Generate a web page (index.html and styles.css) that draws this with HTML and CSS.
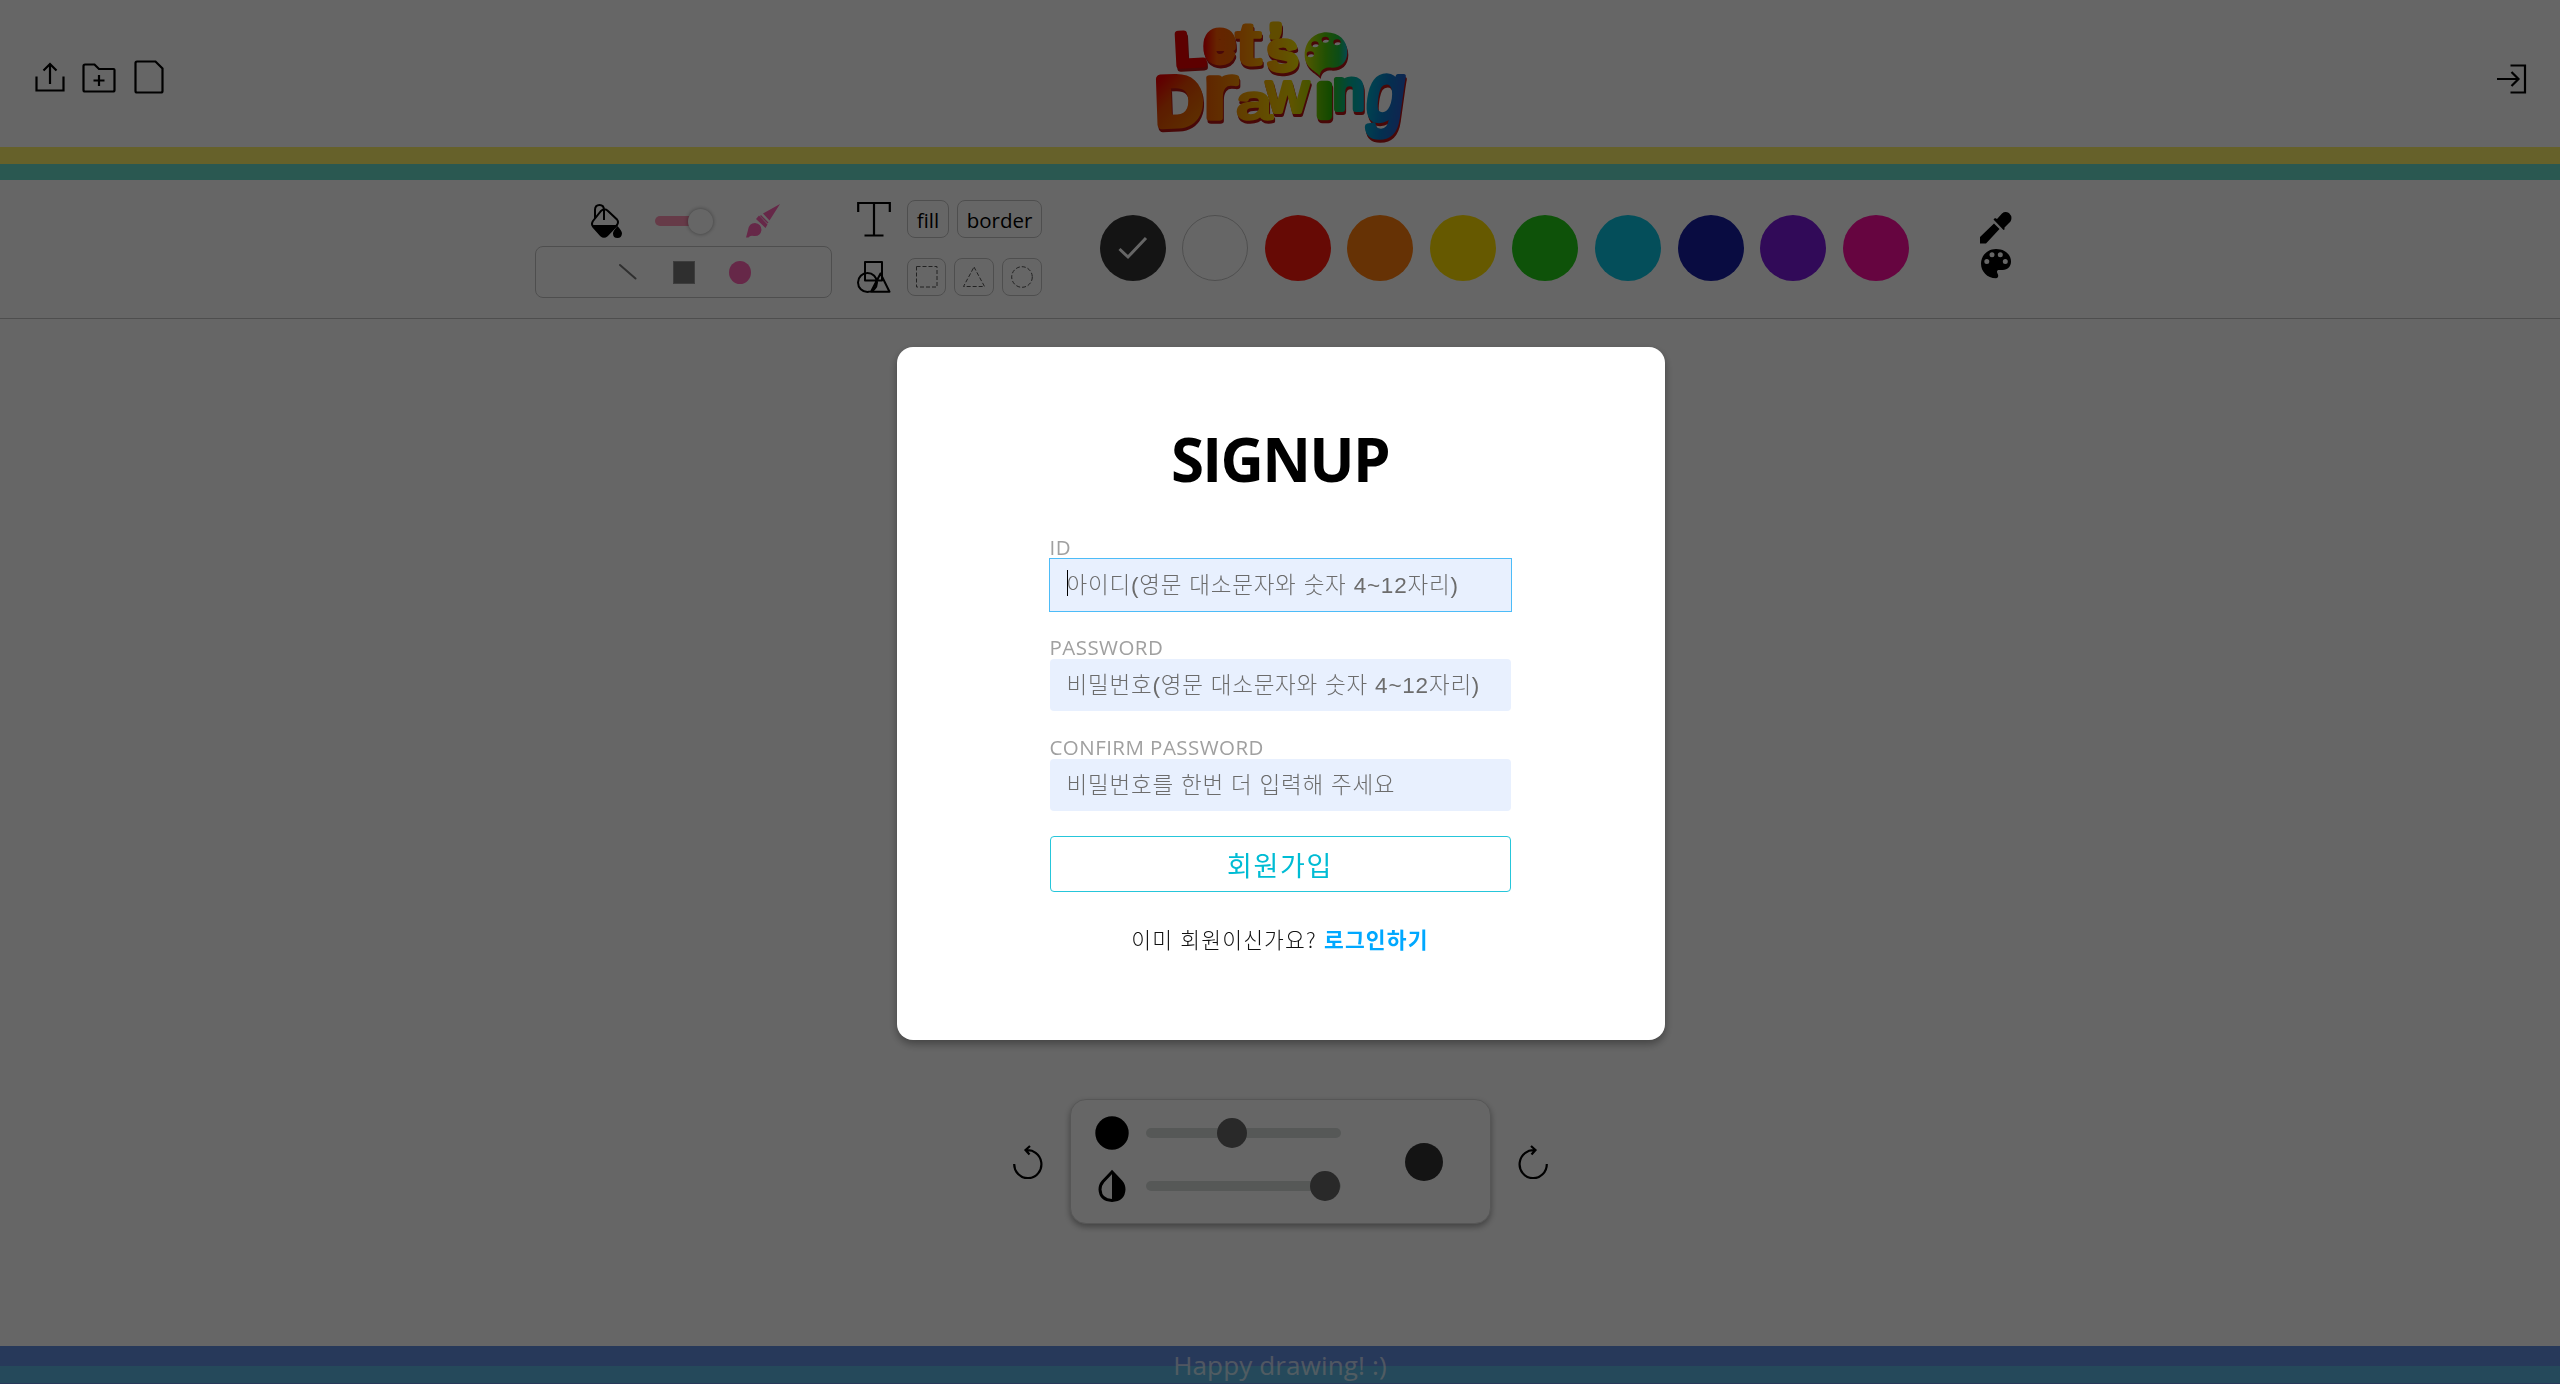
FILE: index.html
```html
<!DOCTYPE html>
<html lang="ko">
<head>
<meta charset="utf-8">
<title>Let's Drawing</title>
<link rel="stylesheet" href="styles.css">
</head>
<body>
<header class="header">
  <nav class="header-menu">
    <svg class="icon-upload" width="30" height="30" viewBox="0 0 30 30"><path d="M1.5 14.5V28.5H28.500V14.500M15 22V2.500M8.500 8.500L15 2L21.500 8.500"/></svg>
    <svg class="icon-folder" width="34" height="30" viewBox="0 0 34 30"><path d="M2.500 1.500H12.500L17 6H31.500Q32.500 6 32.500 7V27Q32.500 28.500 31 28.500H3Q1.500 28.500 1.500 27V3Q1.500 1.500 3 1.500M17 12V23M11.500 17.500H22.500"/></svg>
    <svg class="icon-file" width="30" height="34" viewBox="0 0 30 34"><path d="M3 1.500H21.500L28.500 8.500V31Q28.500 32.500 27 32.500H3Q1.500 32.500 1.500 31V3Q1.500 1.500 3 1.500Z"/></svg>
  </nav>
  <svg class="logo" width="264" height="132" viewBox="60 45 792 396">
    <defs>
      <linearGradient id="c-e"><stop offset="0" stop-color="#f00000"/><stop offset=".4" stop-color="#ff5a00"/><stop offset="1" stop-color="#f06400"/></linearGradient>
      <linearGradient id="c-t"><stop offset="0" stop-color="#ff7800"/><stop offset="1" stop-color="#ffa800"/></linearGradient>
      <linearGradient id="c-s"><stop offset="0" stop-color="#ffa800"/><stop offset="1" stop-color="#f0e000"/></linearGradient>
      <linearGradient id="c-p"><stop offset="0" stop-color="#d2dc00"/><stop offset=".5" stop-color="#50c80a"/><stop offset=".8" stop-color="#1ebe3c"/><stop offset="1" stop-color="#14b4c8"/></linearGradient>
      <linearGradient id="c-d" x1="0" y1="0" x2=".6" y2="1"><stop offset=".2" stop-color="#f00000"/><stop offset=".5" stop-color="#e64600"/><stop offset="1" stop-color="#eb7800"/></linearGradient>
      <linearGradient id="c-r"><stop offset="0" stop-color="#f05a00"/><stop offset="1" stop-color="#f58c00"/></linearGradient>
      <linearGradient id="c-a"><stop offset="0" stop-color="#f59600"/><stop offset="1" stop-color="#f5c800"/></linearGradient>
      <linearGradient id="c-w"><stop offset="0" stop-color="#f5b400"/><stop offset=".6" stop-color="#ebd200"/><stop offset="1" stop-color="#b4d200"/></linearGradient>
      <linearGradient id="c-i"><stop offset="0" stop-color="#78c800"/><stop offset="1" stop-color="#1eb400"/></linearGradient>
      <linearGradient id="c-n"><stop offset="0" stop-color="#28be28"/><stop offset=".5" stop-color="#00b496"/><stop offset="1" stop-color="#00aac8"/></linearGradient>
      <linearGradient id="c-g"><stop offset="0" stop-color="#00aac8"/><stop offset=".5" stop-color="#0a78c8"/><stop offset="1" stop-color="#285ac8"/></linearGradient>
    </defs>
    <g class="logo-letters">
      <text transform="translate(140 197) rotate(-3) scale(1.58 1.38)" fill="#e80000" stroke="#e80000">L</text>
      <text transform="translate(227 184) scale(1.61 1.67)" fill="url(#c-e)" stroke="url(#c-e)">e</text>
      <text class="thin" transform="translate(322 191) scale(2.6 1.78)" fill="url(#c-t)" stroke="url(#c-t)">t</text>
      <text transform="translate(422 180) scale(1.6 1.5)" fill="#f0be00" stroke="#f0be00">’</text>
      <text class="medium" transform="translate(420 212) rotate(-4) scale(1.75 1.6)" fill="url(#c-s)" stroke="url(#c-s)">s</text>
      <text transform="translate(83 374) rotate(-2) scale(1.9 1.98)" fill="url(#c-d)" stroke="url(#c-d)">D</text>
      <text class="thin" transform="translate(222 354) scale(3.1 2.3)" fill="url(#c-r)" stroke="url(#c-r)">r</text>
      <text class="thin" transform="translate(322 358) scale(1.92 1.45)" fill="url(#c-a)" stroke="url(#c-a)">a</text>
      <text class="thin" transform="translate(412 335) scale(1.76 1.7)" fill="url(#c-w)" stroke="url(#c-w)">w</text>
      <text transform="translate(558 348) scale(2.04 1.79)" fill="url(#c-i)" stroke="url(#c-i)">ı</text>
      <text class="medium" transform="translate(613 326) scale(1.68 1.65)" fill="url(#c-n)" stroke="url(#c-n)">n</text>
      <text class="thin" transform="translate(704 361) skewX(-8) scale(2.05 2.45)" fill="url(#c-g)" stroke="url(#c-g)">g</text>
      <path fill="url(#c-p)" fill-rule="evenodd" d="M572 228C562 212 527 206 527 165C527 123 558 97 592 97C630 97 655 122 655 156C655 190 632 204 608 203C590 202 576 206 572 228ZM533 163a11 9 0 1 0 22 0a11 9 0 1 0-22 0ZM547 133a11 9 0 1 0 22 0a11 9 0 1 0-22 0ZM578 119a11 9 0 1 0 22 0a11 9 0 1 0-22 0ZM613 127a11 9 0 1 0 22 0a11 9 0 1 0-22 0Z"/>
    </g>
  </svg>
  <svg class="icon-login" width="30" height="30" viewBox="0 0 30 30"><path d="M13.500 1.500H28V28.500H13.500M0 15H21M14.500 8L21.500 15L14.500 22"/></svg>
</header>
<div class="stripe stripe-yellow"></div>
<div class="stripe stripe-teal"></div>

<section class="toolbar">
  <div class="mode">
    <div class="mode-row">
      <svg width="32" height="34" viewBox="0 0 32 34"><path fill="none" stroke="#000" stroke-width="2" d="M13 16V6Q13 1 8.500 1Q4 1 4 6V14M10 7Q13.500 3.500 17 7L26 15.500Q28 18 26 21L16 31.500Q13 34 10 31.500L2 22.500Q0 20 2 17Z"/><path d="M1.500 21H26L16 31.500Q13 34 9.500 31.500ZM26.500 22Q31 27 31 29.500Q30.500 34 26.500 34Q22 34 22 29.500Q22 27 26.500 22Z"/></svg>
      <div class="switch"><span class="switch-track"></span><span class="switch-thumb"></span></div>
      <svg width="34" height="34" viewBox="0 0 34 34"><path fill="#ff64b4" d="M34 0L23.500 16.500L17 9.500ZM15 11L22.500 18.500L21.500 19.500L14 12ZM13 11.500L21.500 20.500L19.500 24L10 15ZM0 33.500Q1 30 2 26Q3 19 9 19Q15.500 20 15.500 26Q14.500 32.500 8 32Q4 31 2.500 33.500Z"/></svg>
    </div>
    <div class="strokes">
      <svg width="18" height="18" viewBox="0 0 18 18"><path d="M1 2L16.500 15.500" stroke="#777" stroke-width="2" stroke-linecap="round"/></svg>
      <span class="stroke-square"></span>
      <span class="stroke-dot"></span>
    </div>
  </div>
  <div class="shapes">
    <div class="shape-row">
      <svg width="34" height="36" viewBox="0 0 34 36"><path fill="none" stroke="#000" stroke-width="2.200" d="M1.200 11V2H32.800V11M17 2V34M7.500 34.500H26.500"/></svg>
      <button class="tool tool-fill">fill</button>
      <button class="tool tool-border">border</button>
    </div>
    <div class="shape-row shape-row-second">
      <svg width="34" height="32" viewBox="0 0 34 32"><path fill="none" stroke="#000" stroke-width="2" stroke-linejoin="round" d="M8 1H25V19.500H8ZM1 21.500a9.500 9.500 0 1 0 19 0a9.500 9.500 0 1 0-19 0M14 30.800H32.500L23.500 12.500Z"/></svg>
      <button class="tool tool-square"><svg width="22" height="22" viewBox="0 0 22 22"><rect class="dashed" x=".5" y=".5" width="20.500" height="20.500"/></svg></button>
      <button class="tool tool-triangle"><svg width="22" height="22" viewBox="0 0 22 22"><path class="dashed" d="M11 1L21.500 20.500H.5Z"/></svg></button>
      <button class="tool tool-circle"><svg width="22" height="22" viewBox="0 0 22 22"><circle class="dashed" cx="11" cy="11" r="10.300"/></svg></button>
    </div>
  </div>
  <div class="swatches">
    <span class="swatch black"><svg width="30" height="24" viewBox="0 0 30 24"><path d="M1.500 13L10 21L28 2" fill="none" stroke="#fff" stroke-width="3"/></svg></span>
    <span class="swatch white"></span>
    <span class="swatch red"></span>
    <span class="swatch orange"></span>
    <span class="swatch yellow"></span>
    <span class="swatch green"></span>
    <span class="swatch cyan"></span>
    <span class="swatch navy"></span>
    <span class="swatch purple"></span>
    <span class="swatch pink"></span>
  </div>
  <div class="pickers">
    <svg width="32" height="32" viewBox="0 0 32 32"><path d="M0 31.500V25L14 11.500L19.500 17L6 31.500ZM13.500 7.500L15 6L17 7L22 1.500Q25-1 29 1Q33 5 30.500 9.500L24.500 15.500V17.500L23.500 18Z"/></svg>
    <svg width="30" height="30" viewBox="0 0 30 30"><path fill-rule="evenodd" d="M15 0C24 0 30 5.500 30 12.500C30 17 27 21 21.500 21H18C16 21 15.500 22.500 16.500 24.500C18 27 17 29.300 15 29.300C6 29.300 0 22.500 0 14.600C0 6.500 6.500 0 15 0ZM3.300 12.400a2.500 2.500 0 1 0 5 0a2.500 2.500 0 1 0-5 0ZM8.500 5.800a2.500 2.500 0 1 0 5 0a2.500 2.500 0 1 0-5 0ZM16.800 5.800a2.500 2.500 0 1 0 5 0a2.500 2.500 0 1 0-5 0ZM21.800 12.400a2.500 2.500 0 1 0 5 0a2.500 2.500 0 1 0-5 0Z"/></svg>
  </div>
</section>

<main class="canvas">
  <div class="brush-bar">
    <svg width="30" height="34" viewBox="0 0 30 34"><path class="turn" d="M1.200 19A13.600 14 0 1 0 12 5.500M17 1L12.500 5L16.500 9.500"/></svg>
    <div class="brush-panel">
      <div class="brush-sliders">
        <div class="slider-row">
          <svg width="34" height="34" viewBox="0 0 34 34"><circle cx="17" cy="17" r="16.700"/></svg>
          <div class="slider"><span class="slider-thumb size-thumb"></span></div>
        </div>
        <div class="slider-row">
          <svg width="34" height="34" viewBox="0 0 34 34"><path fill="none" stroke="#000" stroke-width="3" d="M17 3L8 12.500Q5 16 5 20.500Q5.500 31 17 31.500Q28.500 31 29 20.500Q29 16 26 12.500Z"/><path d="M17 3L27 13Q29 16 29 20.500Q28.500 31 17 32Z"/></svg>
          <div class="slider"><span class="slider-thumb opacity-thumb"></span></div>
        </div>
      </div>
      <span class="preview"></span>
    </div>
    <svg width="30" height="34" viewBox="0 0 30 34"><path class="turn" d="M28.800 19A13.600 14 0 1 1 18 5.500M13 1L17.500 5L13.500 9.500"/></svg>
  </div>
</main>

<footer class="footer">Happy drawing! :)</footer>

<div class="overlay">
  <form class="modal">
    <h1 class="modal-title">SIGNUP</h1>
    <div class="field">
      <label class="label">ID</label>
      <div class="input focused"><span class="caret"></span><span class="placeholder">아이디(영문 대소문자와 숫자 4~12자리)</span></div>
    </div>
    <div class="field">
      <label class="label">PASSWORD</label>
      <div class="input"><span class="placeholder">비밀번호(영문 대소문자와 숫자 4~12자리)</span></div>
    </div>
    <div class="field">
      <label class="label">CONFIRM PASSWORD</label>
      <div class="input"><span class="placeholder">비밀번호를 한번 더 입력해 주세요</span></div>
    </div>
    <button class="submit" type="button">회원가입</button>
    <p class="switch-form">이미 회원이신가요? <a class="login-link">로그인하기</a></p>
  </form>
</div>
</body>
</html>
```
FILE: styles.css
```css
* { box-sizing: border-box; }

body {
  margin: 0;
  height: 1384px;
  overflow: hidden;
  display: flex;
  flex-direction: column;
  background: #fff;
  color: #000;
  font-family: "Open Sans", "Noto Sans CJK KR", sans-serif;
}

svg { display: block; flex: none; }

.header {
  height: 147px;
  display: grid;
  grid-template-columns: 1fr 264px 1fr;
  padding: 0 33px 0 35px;
}
.header-menu { display: flex; align-items: flex-start; }
.icon-upload { margin: 61.5px 17.5px 0 -.5px; }
.icon-folder { margin: 62.5px 17.5px 0 0; }
.icon-file { margin-top: 60px; }
.icon-login { justify-self: end; margin-top: 63.5px; }
.header-menu path, .icon-login path { fill: none; stroke: #000; stroke-width: 2.2; }
.logo { margin: 15px 0 0; overflow: visible; filter: drop-shadow(1.5px 3px 0 #b41414); }
.logo-letters text {
  font: 100px "Liberation Sans", sans-serif;
  stroke-width: 14;
  stroke-linejoin: round;
}
.logo-letters .thin { stroke-width: 7; }
.logo-letters .medium { stroke-width: 11; }

.stripe-yellow { height: 17px; background: #fff269; }
.stripe-teal { height: 16px; background: #69dccb; }

.toolbar {
  height: 139px;
  display: flex;
  align-items: flex-start;
  padding-left: 535px;
  border-bottom: 1px solid #c4c4c4;
}
.mode { width: 297px; margin-top: 24px; }
.mode-row {
  height: 34px;
  display: flex;
  justify-content: space-between;
  align-items: center;
  margin: 0 52px 8px 56px;
}
.switch { display: flex; align-items: center; width: 59px; height: 26px; }
.switch-track { flex: none; width: 40px; height: 10px; border-radius: 5px; background: #ff93b4; }
.switch-thumb {
  flex: none;
  width: 25px;
  height: 25px;
  margin-left: -7px;
  border-radius: 50%;
  background: #fff;
  box-shadow: 0 0 4px rgba(0, 0, 0, .4);
}
.strokes {
  height: 52px;
  display: flex;
  align-items: center;
  border: 1px solid #c4c4c4;
  border-radius: 8px;
  padding-left: 83px;
}
.stroke-square { width: 22px; height: 23px; margin-left: 36px; background: #777; border: 1px solid #999; }
.stroke-dot { width: 22px; height: 23px; margin-left: 34px; border-radius: 50%; background: #ff64b4; }

.shapes { width: 185px; margin: 20px 57.5px 0 25px; }
.shape-row { display: flex; align-items: center; height: 38px; }
.shape-row-second { margin-top: 20px; }
.tool {
  height: 38px;
  padding: 0;
  display: flex;
  align-items: center;
  justify-content: center;
  background: none;
  border: 1px solid #c4c4c4;
  border-radius: 8px;
  font: 20.5px "Open Sans", sans-serif;
  color: #000;
}
.tool-fill { width: 42px; margin: 0 8px 0 16px; }
.tool-border { width: 85px; }
.tool-fill, .tool-border { padding-top: 2px; }
.tool-square { width: 39px; margin-left: 16px; }
.tool-triangle { width: 40px; margin: 0 8px; }
.tool-circle { width: 40px; }
.dashed { fill: none; stroke: #555; stroke-width: 1; stroke-dasharray: 4 2; }

.swatches { display: flex; gap: 16.6px; margin: 35px 71px 0 0; }
.swatch {
  width: 66px;
  height: 66px;
  border-radius: 50%;
  display: flex;
  align-items: center;
  justify-content: center;
}
.black { background: #333; }
.white { border: 1px solid #c4c4c4; }
.red { background: #ff190d; }
.orange { background: #ff7d0d; }
.yellow { background: #ffdf00; }
.green { background: #23cd17; }
.cyan { background: #0ac3e1; }
.navy { background: #171ea3; }
.purple { background: #7a19dc; }
.pink { background: #ff0da0; }

.pickers { display: flex; flex-direction: column; gap: 5px; margin-top: 32px; }
.pickers svg + svg { margin-left: 1px; }

.canvas { flex: 1; display: flex; flex-direction: column; justify-content: flex-end; align-items: center; }
.brush-bar { display: flex; align-items: center; gap: 27px; margin: 0 0 122px 1px; }
.turn { fill: none; stroke: #000; stroke-width: 2.2; }
.brush-panel {
  width: 421px;
  height: 125px;
  display: flex;
  align-items: center;
  border: 1px solid #d8d8d8;
  border-radius: 16px;
  background: #fff;
  box-shadow: 0 3px 6px rgba(0, 0, 0, .35);
  padding-left: 24px;
}
.brush-sliders { display: flex; flex-direction: column; gap: 19px; margin: 0 64px 4px 0; }
.slider-row { display: flex; align-items: center; gap: 17px; }
.slider { width: 195px; height: 10px; border-radius: 5px; background: #d7dcda; display: flex; align-items: center; }
.slider-thumb { width: 30px; height: 30px; border-radius: 50%; background: #666; }
.size-thumb { margin-left: 71px; }
.opacity-thumb { margin-left: 164px; }
.preview { width: 38px; height: 38px; border-radius: 50%; background: #333; }

.footer {
  height: 38px;
  background: linear-gradient(#628fe1 20px, #5db7e4 20px, #5db7e4 37px, #628fe1 37px);
  color: rgba(255, 255, 255, .68);
  text-align: center;
  font-size: 26px;
  letter-spacing: .15px;
  line-height: 39px;
}

.overlay {
  position: fixed;
  inset: 0;
  display: flex;
  align-items: center;
  justify-content: center;
  background: rgba(0, 0, 0, .6);
}
.modal {
  width: 768px;
  height: 693px;
  margin: 2px 0 0 1px;
  padding: 73px 154px 0 153px;
  border-radius: 16px;
  background: #fff;
  box-shadow: 0 4px 8px rgba(0, 0, 0, .35);
}
.modal-title {
  margin: 0 0 34px;
  height: 84px;
  line-height: 78px;
  font-size: 60px;
  font-weight: 700;
  letter-spacing: -1.7px;
  text-align: center;
}
.field { height: 100.3px; }
.label {
  display: block;
  height: 21px;
  line-height: 19px;
  font-size: 20.5px;
  letter-spacing: .45px;
  color: #a0a0a0;
}
.input {
  height: 52px;
  display: flex;
  align-items: center;
  padding: 0 0 4px 17px;
  border-radius: 4px;
  background: #e8f0fe;
}
.focused { outline: 1.5px solid #4dbcf8; border-radius: 0; }
.caret { width: 1px; height: 26px; margin-right: -1px; background: #000; }
.placeholder {
  font: 300 22.5px "Liberation Sans", "Noto Sans CJK KR", sans-serif;
  letter-spacing: .78px;
  color: #6c6c6c;
  white-space: nowrap;
}
.submit {
  width: 461px;
  height: 56px;
  display: block;
  margin: -2px 0 0;
  padding: 0;
  border: 1px solid #26c6da;
  border-radius: 4px;
  background: #fff;
  color: #00bcd4;
  font: 27px "Noto Sans CJK KR", sans-serif;
  letter-spacing: 1.7px;
}
.switch-form {
  margin: 31px 0 0;
  text-align: center;
  font: 300 21.5px/32px "Noto Sans CJK KR", sans-serif;
  letter-spacing: 1.15px;
  color: #111;
}
.login-link { color: #00a8ff; font-weight: 700; }
```
